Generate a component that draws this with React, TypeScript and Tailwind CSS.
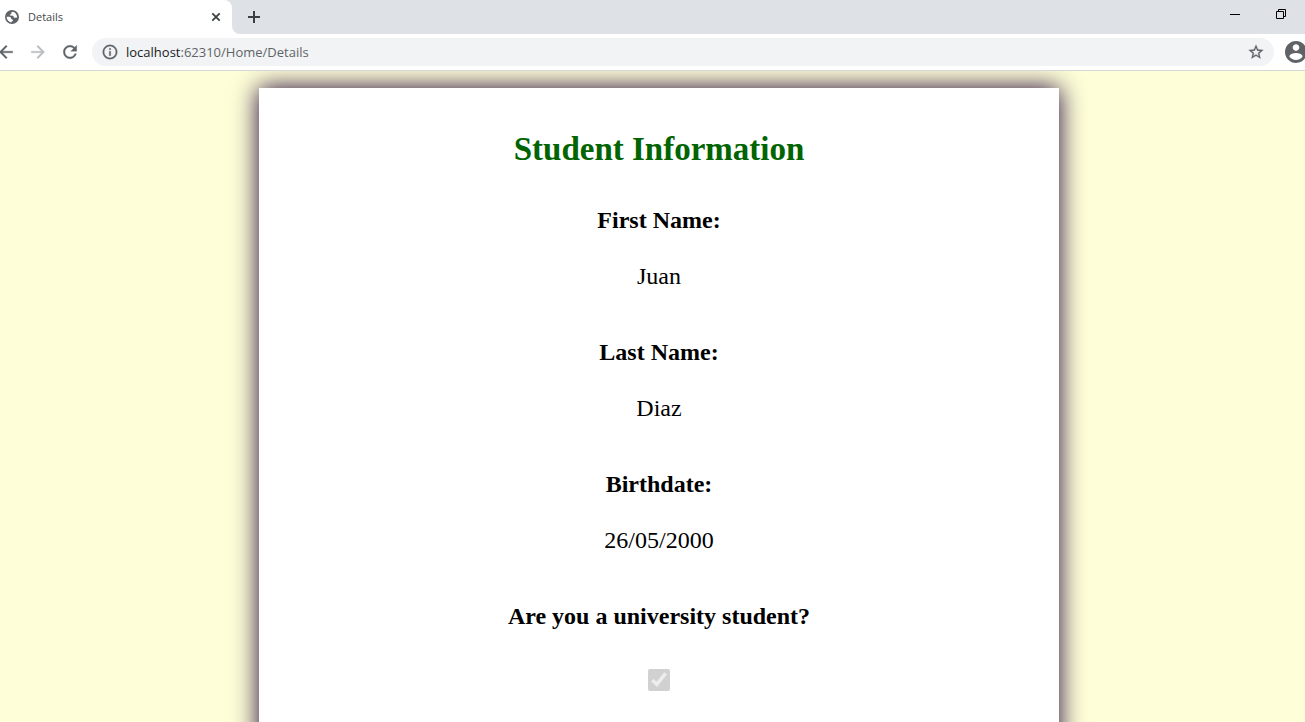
import type { ReactNode } from "react";

function Icon({ className, children, box = "0 0 24 24" }: { className: string; children: ReactNode; box?: string }) {
  return (
    <svg viewBox={box} className={className} fill="currentColor" aria-hidden="true">
      {children}
    </svg>
  );
}

function TabStrip() {
  return (
    <div className="flex h-[34px] items-stretch bg-[#dee1e6]">
      <div className="flex w-[232px] items-center rounded-tr-lg bg-white pr-[10px] pl-[5px]">
        <svg viewBox="0 0 14 14" className="size-[14px] shrink-0" aria-hidden="true">
          <circle cx="7" cy="7" r="7" fill="#5f6368" />
          <path
            d="M7.600 1.700C6.600 2 6.200 2.600 6.300 3.300c.1.600-.5.900-1.100 1.100-.6.300-.5.900.1 1.100l2.400.2c.7.100 1 .6 1 1.200 0 .7.600.9 1.300.8l2.200-.3C12.100 4.600 10.300 2 7.600 1.700zM1.600 6.700c0 2.900 2 5.300 4.700 5.700.2-.8.700-1.200 1.300-1.500.6-.4.4-1.300-.3-1.500-.7-.2-1.200-.5-1.300-1.200C5.900 7.200 5.200 6.800 4.400 6.700z"
            fill="white"
          />
        </svg>
        <span className="flex-1 pl-[9px] text-[11px] leading-4 text-[#45494d]">Details</span>
        <button type="button" aria-label="Close tab" className="flex size-3 items-center justify-center text-[#3c4043]">
          <svg viewBox="0 0 12 12" className="size-3" stroke="currentColor" strokeWidth="1.8" aria-hidden="true">
            <path d="M2.300 2.300l7.400 7.400M9.700 2.300l-7.400 7.400" />
          </svg>
        </button>
      </div>
      <svg viewBox="0 0 8 8" className="size-2 self-end text-white" fill="currentColor" aria-hidden="true">
        <path d="M0 0v8h8A8 8 0 0 1 0 0z" />
      </svg>
      <button type="button" aria-label="New tab" className="flex w-7 items-center justify-center text-[#3c4043]">
        <svg viewBox="0 0 12 12" className="size-3" stroke="currentColor" strokeWidth="2" aria-hidden="true">
          <path d="M6 0v12M0 6h12" />
        </svg>
      </button>
      <div className="ml-auto flex">
        <button type="button" aria-label="Minimize" className="flex h-[28px] w-[46px] items-center justify-center">
          <svg viewBox="0 0 10 10" className="size-[10px]" fill="black" aria-hidden="true">
            <path d="M0 5h10v1H0z" />
          </svg>
        </button>
        <button type="button" aria-label="Restore" className="mr-px flex h-[28px] w-[46px] items-center justify-center">
          <svg viewBox="0 0 10 10" className="size-[10px]" fill="none" stroke="black" aria-hidden="true">
            <path d="M.5 2.500h7v7h-7zM2.500 2.500v-2h7v7h-2" />
          </svg>
        </button>
      </div>
    </div>
  );
}

function Toolbar() {
  return (
    <div className="flex h-[37px] items-center overflow-hidden border-b border-[#d5d7db] bg-white text-[#5f6368]">
      <button type="button" aria-label="Back" className="-ml-1 shrink-0">
        <Icon className="size-5 stroke-current stroke-[0.4]">
          <path d="M20 11H7.83l5.59-5.590L12 4l-8 8 8 8 1.410-1.410L7.830 13H20v-2z" />
        </Icon>
      </button>
      <button type="button" aria-label="Forward" className="ml-3 shrink-0 text-[#babcbe]">
        <Icon className="size-5 stroke-current stroke-[0.4]">
          <path d="M12 4l-1.410 1.410L16.170 11H4v2h12.170l-5.580 5.590L12 20l8-8z" />
        </Icon>
      </button>
      <button type="button" aria-label="Reload" className="ml-3 shrink-0">
        <Icon className="size-5 stroke-current stroke-[0.4]">
          <path d="M17.650 6.350C16.200 4.900 14.210 4 12 4c-4.420 0-7.990 3.580-7.990 8s3.570 8 7.990 8c3.730 0 6.840-2.550 7.730-6h-2.080c-.82 2.330-3.040 4-5.650 4-3.310 0-6-2.690-6-6s2.690-6 6-6c1.660 0 3.140.69 4.220 1.780L13 11h7V4l-2.350 2.350z" />
        </Icon>
      </button>
      <div className="ml-3 flex h-7 min-w-0 flex-1 items-center rounded-full bg-[#f1f3f4] px-[10px]">
        <Icon className="size-4 shrink-0 stroke-current stroke-[0.4]" box="1 1 22 22">
          <path d="M11 7h2v2h-2zm0 4h2v6h-2zm1-9C6.480 2 2 6.480 2 12s4.480 10 10 10 10-4.480 10-10S17.520 2 12 2zm0 18c-4.410 0-8-3.590-8-8s3.590-8 8-8 8 3.590 8 8-3.590 8-8 8z" />
        </Icon>
        <a href="#details" className="flex-1 pl-2 text-[13px] leading-5">
          <span className="text-[#202124]">localhost</span>:62310/Home/Details
        </a>
        <button type="button" aria-label="Bookmark this page" className="shrink-0">
          <Icon className="size-4 stroke-current stroke-[0.4]" box="1 1 22 22">
            <path d="M22 9.240l-7.190-.62L12 2 9.190 8.630 2 9.240l5.460 4.730L5.820 21 12 17.270 18.180 21l-1.630-7.030L22 9.240zM12 15.400l-3.760 2.270 1-4.280-3.320-2.880 4.380-.38L12 6.100l1.710 4.040 4.380.38-3.320 2.880 1 4.280L12 15.400z" />
          </Icon>
        </button>
      </div>
      <button type="button" aria-label="Profile" className="-mr-[2px] ml-[11px] shrink-0">
        <Icon className="size-[22px]" box="2 2 20 20">
          <path d="M12 2C6.480 2 2 6.480 2 12s4.480 10 10 10 10-4.480 10-10S17.520 2 12 2zm0 3c1.660 0 3 1.340 3 3s-1.340 3-3 3-3-1.340-3-3 1.340-3 3-3zm0 14.200c-2.500 0-4.710-1.280-6-3.220.03-1.990 4-3.080 6-3.080 1.990 0 5.970 1.090 6 3.080-1.290 1.940-3.500 3.220-6 3.220z" />
        </Icon>
      </button>
    </div>
  );
}

const fields = [
  { label: "First Name:", value: "Juan" },
  { label: "Last Name:", value: "Diaz" },
  { label: "Birthdate:", value: "26/05/2000" },
];

export default function App() {
  return (
    <div className="flex min-h-screen flex-col bg-[#fefed8]">
      <header className="font-['Open_Sans','Noto_Sans',sans-serif]">
        <TabStrip />
        <Toolbar />
      </header>
      <main className="flex flex-1 justify-center overflow-hidden pt-[17px] pl-[13px] font-['Liberation_Serif',serif] text-black">
        <section className="-mb-10 flex w-full max-w-[800px] flex-col items-center bg-white pt-10 text-center text-[24px] leading-7 shadow-[0_0_24px_0_#1e0037]">
          <h1 className="mb-9 text-[33px] leading-[42px] font-bold text-[#006400]">Student Information</h1>
          <dl>
            {fields.map((field) => (
              <div key={field.label} className="mb-12 flex flex-col gap-7">
                <dt className="font-bold">{field.label}</dt>
                <dd>{field.value}</dd>
              </div>
            ))}
          </dl>
          <label htmlFor="university" className="mb-[39px] font-bold">
            Are you a university student?
          </label>
          <input id="university" type="checkbox" defaultChecked disabled className="mb-16 size-[22px]" />
        </section>
      </main>
    </div>
  );
}
